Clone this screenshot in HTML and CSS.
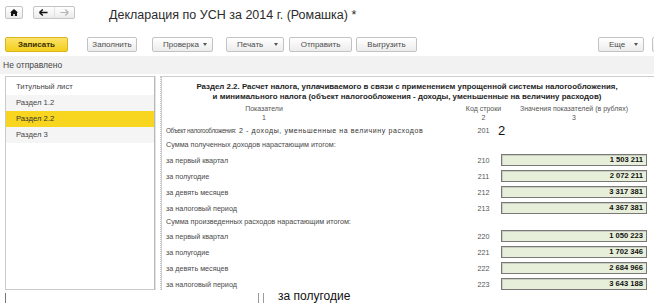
FILE: index.html
```html
<!DOCTYPE html>
<html lang="ru">
<head>
<meta charset="utf-8">
<title>Декларация по УСН</title>
<link rel="stylesheet" href="styles.css">
</head>
<body>
<div class="top">
  <div class="nbtn">
    <svg width="8" height="7" viewBox="0 0 8 7"><path d="M4 0 L8 3.6 L7 3.6 L7 7 L4.8 7 L4.8 5 L3.2 5 L3.2 7 L1 7 L1 3.6 L0 3.6 Z" fill="#111"/></svg>
  </div>
  <div class="nav">
    <div class="seg"><svg width="9" height="7" viewBox="0 0 9 7"><path d="M0.5 3.5 L3.8 0.5 M0.5 3.5 L3.8 6.5 M0.8 3.5 H8.5" stroke="#111" stroke-width="1.5" fill="none"/></svg></div>
    <div class="seg"><svg width="9" height="7" viewBox="0 0 9 7"><path d="M8.5 3.5 L5.2 0.5 M8.5 3.5 L5.2 6.5 M8.2 3.5 H0.5" stroke="#b5b5b5" stroke-width="1.2" fill="none"/></svg></div>
  </div>
  <h1 class="title">Декларация по УСН за 2014 г. (Ромашка) *</h1>
</div>

<div class="toolbar">
  <div class="btn btn-main">Записать</div>
  <div class="btn w-fill">Заполнить</div>
  <div class="btn drop w-check">Проверка <span class="tri"></span></div>
  <div class="btn drop w-print">Печать <span class="tri"></span></div>
  <div class="btn w-send">Отправить</div>
  <div class="btn w-upload">Выгрузить</div>
  <div class="grow"></div>
  <div class="btn drop w-more">Еще <span class="tri"></span></div>
  <div class="btn w-cut"></div>
</div>

<div class="status">Не отправлено</div>

<div class="main">
  <div class="side">
    <div class="item">Титульный лист</div>
    <div class="item alt">Раздел 1.2</div>
    <div class="item sel">Раздел 2.2</div>
    <div class="item alt">Раздел 3</div>
  </div>
  <div class="split"></div>
  <div class="form">
    <div class="fhead">
      <div>Раздел 2.2. Расчет налога, уплачиваемого в связи с применением упрощенной системы налогообложения,</div>
      <div>и минимального налога (объект налогообложения - доходы, уменьшенные на величину расходов)</div>
    </div>
    <div class="colhead">
      <div class="c1">Показатели<br>1</div>
      <div></div>
      <div class="c2">Код строки<br>2</div>
      <div class="c3">Значения показателей (в рублях)<br>3</div>
    </div>
    <div class="obj">
      <div class="olabel">Объект налогообложения:</div>
      <div class="otext">2 - доходы, уменьшенные на величину расходов</div>
      <div class="code">201</div>
      <div class="big">2</div>
    </div>
    <div class="ghead">Сумма полученных доходов нарастающим итогом:</div>
    <div class="row"><div class="lbl">за первый квартал</div><div class="code">210</div><div class="val">1 503 211</div></div>
    <div class="row"><div class="lbl">за полугодие</div><div class="code">211</div><div class="val">2 072 211</div></div>
    <div class="row"><div class="lbl">за девять месяцев</div><div class="code">212</div><div class="val">3 317 381</div></div>
    <div class="row"><div class="lbl">за налоговый период</div><div class="code">213</div><div class="val">4 367 381</div></div>
    <div class="ghead g2">Сумма произведенных расходов нарастающим итогом:</div>
    <div class="row"><div class="lbl">за первый квартал</div><div class="code">220</div><div class="val">1 050 223</div></div>
    <div class="row"><div class="lbl">за полугодие</div><div class="code">221</div><div class="val">1 702 346</div></div>
    <div class="row"><div class="lbl">за девять месяцев</div><div class="code">222</div><div class="val">2 684 966</div></div>
    <div class="row"><div class="lbl">за налоговый период</div><div class="code">223</div><div class="val">3 643 188</div></div>
  </div>
</div>

<div class="foot">
  <span class="caret"></span>
  <span class="bars"></span>
  <span class="ftext">за полугодие</span>
</div>
</body>
</html>
```

FILE: styles.css
```css
html, body {
  margin: 0;
  padding: 0;
}
body {
  width: 654px;
  height: 303px;
  overflow: hidden;
  background: #fff;
  font-family: "Liberation Sans", Arial, sans-serif;
  color: #333;
}

/* top bar */
.top {
  display: flex;
  align-items: flex-start;
  height: 37px;
  padding: 6px 0 0 5px;
  box-sizing: border-box;
}
.nbtn, .nav {
  height: 13px;
  box-sizing: border-box;
  border: 1px solid #c4c4c4;
  border-radius: 2px;
  background: linear-gradient(#ffffff, #ebebeb);
}
.nbtn {
  width: 18px;
  display: flex;
  align-items: center;
  justify-content: center;
}
.nav {
  width: 42px;
  margin-left: 10px;
  display: flex;
}
.nav .seg {
  flex: 1;
  display: flex;
  align-items: center;
  justify-content: center;
}
.nav .seg + .seg {
  border-left: 1px solid #e2e2e2;
}
.title {
  margin: 2px 0 0 34px;
  font-size: 12.5px;
  line-height: 14px;
  font-weight: normal;
  color: #2b2b2b;
  white-space: nowrap;
}

/* toolbar */
.toolbar {
  display: flex;
  align-items: flex-start;
  width: 672px;
  height: 19px;
  padding-left: 5px;
  box-sizing: border-box;
}
.btn {
  height: 15px;
  flex: none;
  box-sizing: border-box;
  border: 1px solid #c3c3c3;
  border-radius: 2px;
  background: linear-gradient(#ffffff, #ececec);
  font-size: 8px;
  color: #4c4c4c;
  display: flex;
  align-items: center;
  justify-content: center;
  white-space: nowrap;
}
.btn.drop {
  justify-content: space-between;
  padding: 0 5px 0 10px;
}
.tri {
  width: 0;
  height: 0;
  border-left: 2.5px solid transparent;
  border-right: 2.5px solid transparent;
  border-top: 3px solid #555;
}
.btn-main {
  width: 63px;
  background: linear-gradient(#fbe36a, #f3cf1c);
  border-color: #d9b620;
  color: #3a3000;
  font-weight: bold;
}
.w-fill { width: 50px; margin-left: 19px; }
.w-check { width: 61px; margin-left: 15px; }
.w-print { width: 58px; margin-left: 13px; }
.w-send { width: 63px; margin-left: 5px; }
.w-upload { width: 61px; margin-left: 4px; }
.w-more { width: 46px; padding-left: 9px; }
.w-cut { width: 20px; margin-left: 8px; }
.grow { flex: 1; }

/* status */
.status {
  height: 18px;
  line-height: 18px;
  background: #f2f2f2;
  font-size: 8.5px;
  color: #454545;
  padding-left: 3px;
}

/* main area */
.main {
  display: flex;
  height: 214px;
  margin-top: 2px;
  padding-left: 5px;
}
.side {
  width: 150px;
  flex: none;
  box-sizing: border-box;
  border: 1px solid #cacaca;
  border-right-color: #b9b9b9;
  box-shadow: 1px 0 0 #e2e2e2;
  padding-top: 2px;
}
.item {
  height: 16px;
  line-height: 16px;
  padding-left: 10px;
  font-size: 7.7px;
  color: #454545;
}
.item.alt { background: #f5f5f5; }
.item.sel { background: #f8d51f; color: #333; }

.split {
  width: 4px;
  flex: none;
  margin-left: 1px;
  border-right: 1px dotted #c6c6c6;
}

.form {
  width: 494px;
  flex: none;
  box-sizing: border-box;
  border: 1px solid #cdcdcd;
  border-right: none;
  border-bottom: none;
  overflow: hidden;
  padding-left: 4px;
  color: #4a4a4a;
}
.fhead {
  width: 490px;
  margin-left: -4px;
  padding-top: 5px;
  text-align: center;
  font-weight: bold;
  font-size: 7.9px;
  line-height: 10px;
  color: #1e1e1e;
  white-space: nowrap;
}
.colhead {
  display: grid;
  grid-template-columns: 196px 104px 35px 146px;
  margin-top: 2px;
  font-size: 7px;
  line-height: 9px;
  color: #555;
  text-align: center;
  white-space: nowrap;
}
.colhead > div {
  display: flex;
  flex-direction: column;
  align-items: center;
}
.obj, .row {
  display: grid;
  grid-template-columns: 300px 35px 146px;
  align-items: center;
  height: 16px;
  font-size: 7.2px;
  white-space: nowrap;
}
.obj {
  grid-template-columns: 73px 227px 35px 146px;
}
.olabel {
  font-size: 6.4px;
  letter-spacing: -0.35px;
}
.otext {
  font-size: 7px;
  letter-spacing: 0.6px;
  color: #333;
}
.code {
  text-align: center;
  color: #555;
}
.big {
  font-size: 13px;
  color: #111;
  margin-left: -3px;
}
.ghead {
  height: 14px;
  line-height: 14px;
  font-size: 7.2px;
  white-space: nowrap;
}
.ghead.g2 {
  height: 12px;
  line-height: 12px;
}
.val {
  height: 12px;
  box-sizing: border-box;
  border: 1px solid #787878;
  background: #e7efdb;
  box-shadow: inset 1px 1px 0 #c9cfc0;
  text-align: right;
  padding-right: 3px;
  font-weight: bold;
  font-size: 7.6px;
  line-height: 10px;
  color: #111;
}

/* stray fragment at bottom */
.foot {
  display: flex;
  align-items: flex-end;
  height: 13px;
  padding-left: 5px;
}
.caret {
  width: 1px;
  height: 10px;
  background: #777;
}
.bars {
  width: 4px;
  height: 10px;
  margin-left: 252px;
  border-left: 1px solid #9a9a9a;
  border-right: 1px solid #9a9a9a;
}
.ftext {
  margin-left: 14px;
  font-size: 12px;
  line-height: 13px;
  height: 13px;
  color: #111;
  white-space: nowrap;
}
```
